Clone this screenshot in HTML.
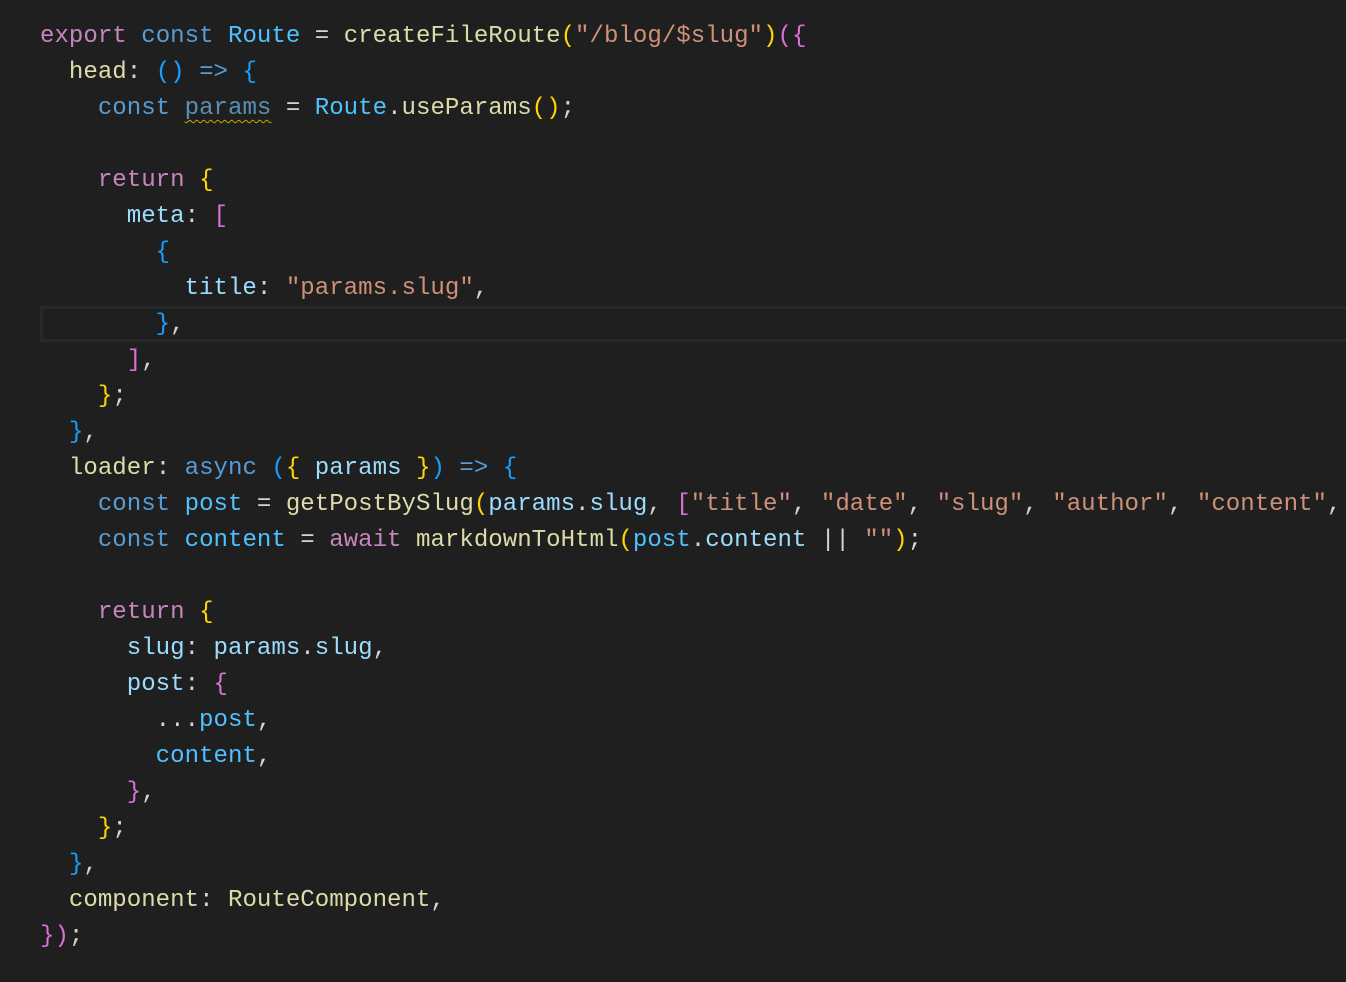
<!DOCTYPE html>
<html><head><style>
html,body{margin:0;padding:0;background:#1f1f1f;width:1346px;height:982px;overflow:hidden}
.c{position:absolute;left:40px;top:19px;font-family:"Liberation Mono",monospace;font-size:24.1px;line-height:36px;color:#d4d4d4;white-space:pre}
.k{color:#569cd6}.p{color:#c586c0}.v{color:#9cdcfe}.f{color:#dcdcaa}.s{color:#ce9178}.o{color:#4fc1ff}
.y{color:#ffd700}.m{color:#da70d6}.b{color:#179fff}
.sq{color:#5a8fb5;text-decoration:underline wavy #cca700;text-underline-offset:5px;text-decoration-thickness:1px}
.hl{position:absolute;left:40px;top:306px;width:1310px;height:30px;border:3px solid #282828}
</style></head><body>
<div class="hl"></div>
<div class="c"><span class="p">export</span> <span class="k">const</span> <span class="o">Route</span> = <span class="f">createFileRoute</span><span class="y">(</span><span class="s">"/blog/$slug"</span><span class="y">)</span><span class="m">(</span><span class="m">{</span>
  <span class="f">head</span>: <span class="b">()</span> <span class="k">=&gt;</span> <span class="b">{</span>
    <span class="k">const</span> <span class="sq">params</span> = <span class="o">Route</span>.<span class="f">useParams</span><span class="y">()</span>;

    <span class="p">return</span> <span class="y">{</span>
      <span class="v">meta</span>: <span class="m">[</span>
        <span class="b">{</span>
          <span class="v">title</span>: <span class="s">"params.slug"</span>,
        <span class="b">}</span>,
      <span class="m">]</span>,
    <span class="y">}</span>;
  <span class="b">}</span>,
  <span class="f">loader</span>: <span class="k">async</span> <span class="b">(</span><span class="y">{</span> <span class="v">params</span> <span class="y">}</span><span class="b">)</span> <span class="k">=&gt;</span> <span class="b">{</span>
    <span class="k">const</span> <span class="o">post</span> = <span class="f">getPostBySlug</span><span class="y">(</span><span class="v">params</span>.<span class="v">slug</span>, <span class="m">[</span><span class="s">"title"</span>, <span class="s">"date"</span>, <span class="s">"slug"</span>, <span class="s">"author"</span>, <span class="s">"content"</span>,
    <span class="k">const</span> <span class="o">content</span> = <span class="p">await</span> <span class="f">markdownToHtml</span><span class="y">(</span><span class="o">post</span>.<span class="v">content</span> || <span class="s">""</span><span class="y">)</span>;

    <span class="p">return</span> <span class="y">{</span>
      <span class="v">slug</span>: <span class="v">params</span>.<span class="v">slug</span>,
      <span class="v">post</span>: <span class="m">{</span>
        ...<span class="o">post</span>,
        <span class="o">content</span>,
      <span class="m">}</span>,
    <span class="y">}</span>;
  <span class="b">}</span>,
  <span class="f">component</span>: <span class="f">RouteComponent</span>,
<span class="m">})</span>;</div>
</body></html>
